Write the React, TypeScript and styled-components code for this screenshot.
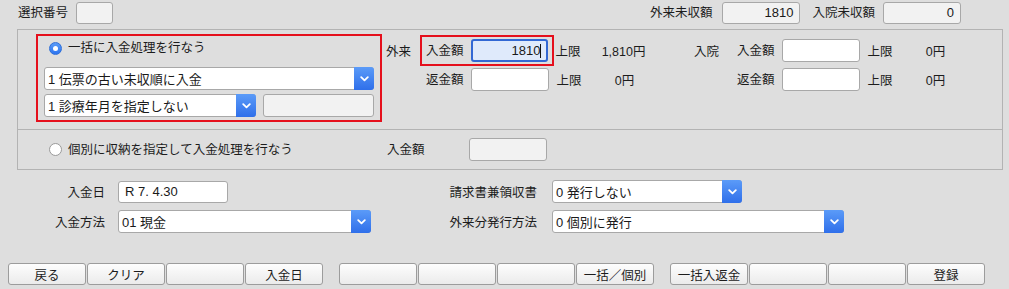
import React from "react";
import styled, { createGlobalStyle } from "styled-components";

const GlobalStyle = createGlobalStyle`
  html, body { margin: 0; padding: 0; background: #dedede; }
  body {
    font-family: "Liberation Sans", "Noto Sans CJK JP", sans-serif;
    font-size: 12.5px;
    color: #222;
  }
  * { box-sizing: border-box; }
`;

const Page = styled.div`
  width: 1009px;
  height: 289px;
  padding-top: 2px;
  display: flex;
  flex-direction: column;
  overflow: hidden;
  background: #dedede;
`;

const TopRow = styled.div`
  display: flex;
  align-items: center;
  height: 22px;
  padding-left: 18px;
  padding-right: 48px;
`;

const Label = styled.span<{ $gap?: number; $lead?: number }>`
  font-size: 12.5px;
  line-height: 16px;
  white-space: nowrap;
  margin-left: ${(p) => p.$lead ?? 0}px;
  margin-right: ${(p) => p.$gap ?? 0}px;
  color: #1c1c1c;
`;

const RightGroup = styled.div`
  margin-left: auto;
  display: flex;
  align-items: center;
`;

const TextBox = styled.div<{ $w: number; $h?: number; $disabled?: boolean; $right?: boolean }>`
  width: ${(p) => p.$w}px;
  height: ${(p) => p.$h ?? 23}px;
  border: 1px solid #a8a8a8;
  border-radius: 3px;
  background: ${(p) => (p.$disabled ? "#f2f2f2" : "#fff")};
  font-size: 13px;
  line-height: 20px;
  padding: 0 6px;
  display: flex;
  align-items: center;
  justify-content: ${(p) => (p.$right ? "flex-end" : "flex-start")};
  color: #1a1a1a;
  white-space: nowrap;
  flex-shrink: 0;
`;

const FocusBox = styled.div`
  width: 77px;
  height: 23px;
  border: 2px solid #3268d4;
  border-radius: 3px;
  background: #dfeafb;
  font-size: 13px;
  padding: 0 5px;
  display: flex;
  align-items: center;
  justify-content: flex-end;
  color: #1a1a1a;
  flex-shrink: 0;
`;

const Caret = styled.span`
  display: inline-block;
  width: 1px;
  height: 14px;
  background: #111;
  margin-left: -1px;
`;

const Panel = styled.div`
  margin: 5px 0 0 17px;
  width: 986px;
  border: 1px solid #b3b3b3;
`;

const PanelTop = styled.div`
  height: 100px;
  display: flex;
  align-items: flex-start;
  border-bottom: 1px solid #b3b3b3;
`;

const RedBox = styled.div`
  margin: 4px 0 0 18px;
  width: 346px;
  height: 88px;
  border: 2px solid #e50f1c;
  padding: 0 6px;
  display: flex;
  flex-direction: column;
  flex-shrink: 0;
`;

const RadioRow = styled.div`
  height: 24px;
  display: flex;
  align-items: center;
  gap: 6px;
  padding-left: 5px;
  margin-bottom: 7px;
`;

const Radio = styled.span<{ $checked?: boolean }>`
  width: 13px;
  height: 13px;
  border-radius: 50%;
  flex-shrink: 0;
  display: flex;
  align-items: center;
  justify-content: center;
  background: ${(p) => (p.$checked ? "linear-gradient(#5a9cf8, #2c74f0)" : "#fff")};
  border: 1px solid ${(p) => (p.$checked ? "#2f6fd8" : "#9a9a9a")};
  &::after {
    content: "";
    width: 5px;
    height: 5px;
    border-radius: 50%;
    background: #fff;
    display: ${(p) => (p.$checked ? "block" : "none")};
  }
`;

const SelectBox = styled.div<{ $w?: number }>`
  width: ${(p) => (p.$w ? `${p.$w}px` : "100%")};
  height: 23px;
  border: 1px solid #a8a8a8;
  border-radius: 3px;
  background: #fff;
  display: flex;
  align-items: center;
  flex-shrink: 0;
`;

const SelectText = styled.span`
  flex: 1;
  font-size: 13px;
  color: #1a1a1a;
  padding-left: 3px;
  white-space: nowrap;
  overflow: hidden;
`;

const ArrowBtn = styled.span`
  width: 20px;
  height: 23px;
  margin: -1px -1px -1px 0;
  border-radius: 0 3px 3px 0;
  background: linear-gradient(#5b9bf8, #2f6fea);
  display: flex;
  align-items: center;
  justify-content: center;
  flex-shrink: 0;
`;

const SelectRow = styled.div`
  display: flex;
  gap: 7px;
  margin-top: 4px;
`;

const Amounts = styled.div`
  display: flex;
  margin: 5px 0 0 4px;
`;

const Block = styled.div<{ $w?: number }>`
  width: ${(p) => (p.$w ? `${p.$w}px` : "auto")};
  flex-shrink: 0;
  display: flex;
  flex-direction: column;
`;

const AmountRow = styled.div`
  display: flex;
  align-items: center;
  & + & {
    margin-top: -2px;
  }
`;

const SideLabel = styled.span<{ $w: number }>`
  width: ${(p) => p.$w}px;
  font-size: 12.5px;
  color: #1c1c1c;
  flex-shrink: 0;
`;

const FieldBox = styled.div<{ $highlight?: boolean }>`
  border: 2px solid ${(p) => (p.$highlight ? "#e50f1c" : "transparent")};
  padding: 2px 4px;
  display: flex;
  align-items: center;
  gap: 7px;
`;

const LimitLabel = styled.span`
  margin-left: 2px;
  font-size: 12.5px;
  color: #1c1c1c;
`;

const LimitValue = styled.span`
  width: 64px;
  margin-left: 11px;
  text-align: center;
  font-size: 12.5px;
  color: #1c1c1c;
`;

const PanelBottom = styled.div`
  height: 39px;
  display: flex;
  align-items: center;
  padding-left: 31px;
`;

const RadioOption = styled.div<{ $w: number }>`
  width: ${(p) => p.$w}px;
  display: flex;
  align-items: center;
  gap: 6px;
`;

const FormGrid = styled.div`
  margin-top: 10px;
  display: grid;
  grid-template-columns: 118px 331px 103px 1fr;
  grid-auto-rows: 23px;
  row-gap: 7px;
  align-items: center;
`;

const FormLabel = styled.span<{ $pad: number }>`
  text-align: right;
  padding-right: ${(p) => p.$pad}px;
  font-size: 12.5px;
  color: #1c1c1c;
  white-space: nowrap;
`;

const ButtonBar = styled.div`
  margin-top: 30px;
  padding-left: 8px;
  display: flex;
  gap: 16px;
`;

const ButtonGroup = styled.div`
  display: flex;
  gap: 1px;
`;

const Button = styled.button`
  width: 78px;
  height: 22px;
  border: 1px solid #9c9c9c;
  border-radius: 3px;
  background: linear-gradient(#fdfdfd, #ebebeb);
  font-family: "Liberation Sans", "Noto Sans CJK JP", sans-serif;
  font-size: 12.5px;
  color: #1c1c1c;
  padding: 0;
  display: flex;
  align-items: center;
  justify-content: center;
`;

const Chevron = () => (
  <svg width="9" height="6" viewBox="0 0 9 6">
    <polyline points="1.2,1.2 4.5,4.4 7.8,1.2" fill="none" stroke="#fff" strokeWidth="1.8" strokeLinecap="round" strokeLinejoin="round" />
  </svg>
);

const Select = ({ text, w }: { text: string; w?: number }) => (
  <SelectBox $w={w}>
    <SelectText>{text}</SelectText>
    <ArrowBtn>
      <Chevron />
    </ArrowBtn>
  </SelectBox>
);

type RowDef = { label: string; focus?: boolean; value?: string; limit: string };

const AmountBlock = ({ side, rows, w, sideW }: { side: string; rows: RowDef[]; w?: number; sideW: number }) => (
  <Block $w={w}>
    {rows.map((r, i) => (
      <AmountRow key={i}>
        <SideLabel $w={sideW}>{i === 0 ? side : ""}</SideLabel>
        <FieldBox $highlight={r.focus}>
          <Label>{r.label}</Label>
          {r.focus ? (
            <FocusBox>
              {r.value}
              <Caret />
            </FocusBox>
          ) : (
            <TextBox $w={78} />
          )}
        </FieldBox>
        <LimitLabel>上限</LimitLabel>
        <LimitValue>{r.limit}</LimitValue>
      </AmountRow>
    ))}
  </Block>
);

const groups = [
  ["戻る", "クリア", "", "入金日"],
  ["", "", "", "一括／個別"],
  ["一括入返金", "", "", "登録"],
];

export default function App() {
  return (
    <>
      <GlobalStyle />
      <Page>
        <TopRow>
          <Label $gap={8}>選択番号</Label>
          <TextBox $w={37} $h={22} $disabled />
          <RightGroup>
            <Label $gap={10}>外来未収額</Label>
            <TextBox $w={78} $h={22} $disabled $right>1810</TextBox>
            <Label $gap={8} $lead={12}>入院未収額</Label>
            <TextBox $w={78} $h={22} $disabled $right>0</TextBox>
          </RightGroup>
        </TopRow>

        <Panel>
          <PanelTop>
            <RedBox>
              <RadioRow>
                <Radio $checked />
                <Label>一括に入金処理を行なう</Label>
              </RadioRow>
              <Select text="1 伝票の古い未収順に入金" />
              <SelectRow>
                <Select text="1 診療年月を指定しない" w={212} />
                <TextBox $w={111} $disabled />
              </SelectRow>
            </RedBox>
            <Amounts>
              <AmountBlock
                w={308}
                sideW={34}
                side="外来"
                rows={[
                  { label: "入金額", focus: true, value: "1810", limit: "1,810円" },
                  { label: "返金額", limit: "0円" },
                ]}
              />
              <AmountBlock
                sideW={37}
                side="入院"
                rows={[
                  { label: "入金額", limit: "0円" },
                  { label: "返金額", limit: "0円" },
                ]}
              />
            </Amounts>
          </PanelTop>
          <PanelBottom>
            <RadioOption $w={338}>
              <Radio />
              <Label>個別に収納を指定して入金処理を行なう</Label>
            </RadioOption>
            <Label $gap={44}>入金額</Label>
            <TextBox $w={78} $disabled />
          </PanelBottom>
        </Panel>

        <FormGrid>
          <FormLabel $pad={13}>入金日</FormLabel>
          <TextBox $w={110} $h={22}>R 7. 4.30</TextBox>
          <FormLabel $pad={15}>請求書兼領収書</FormLabel>
          <Select text="0 発行しない" w={190} />
          <FormLabel $pad={13}>入金方法</FormLabel>
          <Select text="01 現金" w={253} />
          <FormLabel $pad={15}>外来分発行方法</FormLabel>
          <Select text="0 個別に発行" w={292} />
        </FormGrid>

        <ButtonBar>
          {groups.map((g, gi) => (
            <ButtonGroup key={gi}>
              {g.map((t, i) => (
                <Button key={i}>{t}</Button>
              ))}
            </ButtonGroup>
          ))}
        </ButtonBar>
      </Page>
    </>
  );
}
